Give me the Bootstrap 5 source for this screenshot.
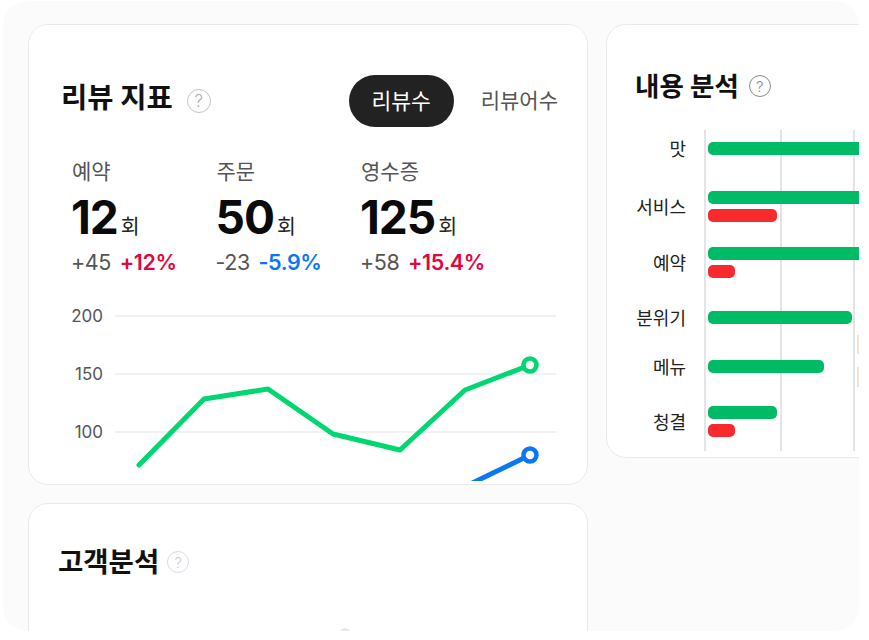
<!DOCTYPE html>
<html lang="ko">
<head>
    <meta charset="UTF-8">
    <meta name="viewport" content="width=device-width, initial-scale=1.0">
    <title>리뷰 지표</title>
    <link href="https://cdn.jsdelivr.net/npm/bootstrap@5.3.0/dist/css/bootstrap.min.css" rel="stylesheet">
    <style>
        body {
            background: #fff;
            font-family: Inter, "Noto Sans CJK KR", sans-serif;
            overflow: hidden;
        }
        /* Panel */
        .panel-wrap {
            width: 856px;
            height: 630px;
            margin: 1px 0 0 3px;
            padding: 23px 0 0 25px;
            background: #fbfbfb;
            border-radius: 24px;
            overflow: hidden;
            gap: 18px;
        }
        .left-col { width: 560px; flex-shrink: 0; gap: 18px; }
        .sheet {
            border: 1.5px solid #e9e9e9;
            border-radius: 20px;
            background: #fff;
            overflow: hidden;
            flex-shrink: 0;
        }
        .sheet-review { height: 461px; padding: 50px 29px 0 32px; }
        .sheet-customer { height: 200px; padding: 39px 0 0 29px; }
        .sheet-content { width: 300px; height: 434px; padding: 42px 0 0 29px; }

        /* Titles */
        .sheet-title { font-size: 28.5px; font-weight: 700; color: #111; line-height: 46px; margin: 0 0 6px; }
        .sheet-title.smaller { font-size: 27.5px; line-height: 38px; margin: 0; }
        .sheet-title.tighter { font-size: 26.5px; line-height: 38px; margin: 0 0 0 -1px; }
        .help-mark {
            width: 24px;
            height: 24px;
            margin-left: 14px;
            border: 1.5px solid #c4c4c4;
            color: #aaa;
            font-size: 17px;
            font-weight: 300;
            line-height: 1;
        }
        .help-mark.dark { width: 22px; height: 22px; margin-left: 10px; border-color: #8a8a8a; color: #8a8a8a; font-size: 15px; }
        .help-mark.pale { width: 22px; height: 22px; margin-left: 8px; border-color: #d8dce2; color: #c8ccd2; font-size: 15px; }

        /* Toggle */
        .pill-on {
            width: 105px;
            height: 52px;
            background: #222;
            color: #fff;
            font-size: 21.5px;
            border-radius: 26px;
            font-weight: 400;
            border: 0;
            padding: 0;
        }
        .pill-off { font-size: 21px; color: #555; margin-left: 27px; background: none; border: 0; padding: 0; }

        /* Stats */
        .stat-row { margin: 30px 0 0 11px; }
        .stat-item { width: 144.5px; }
        .stat-name { font-size: 21px; color: #555; line-height: 30px; margin-bottom: 9px; }
        .stat-num { font-size: 46px; font-weight: 700; color: #0a0a0a; line-height: 42px; letter-spacing: -1px; margin-left: -1px; }
        .stat-unit { font-size: 20.5px; font-weight: 400; color: #222; margin-left: 3px; letter-spacing: 0; }
        .stat-diff { font-size: 21.5px; color: #555; line-height: 28px; white-space: nowrap; letter-spacing: -.4px; margin-left: -1px; }
        .stat-diff b { font-weight: 600; margin-left: 3px; }
        .tone-up { color: #e3053f; }
        .tone-down { color: #0a78f5; }

        /* Line chart */
        .line-plot { display: block; margin: 30px 0 0 -32px; }
        .line-plot text { font-size: 17px; fill: #555; font-family: Inter, sans-serif; }

        /* Bars */
        .bar-plot { margin-top: 24.5px; padding-top: 12px; height: 321px; width: 300px; }
        .grid-v { position: absolute; top: 0; bottom: 0; width: 1.5px; background: #e4e4e4; }
        .tan-edge { position: absolute; left: 221px; width: 2px; background: #f0e2d4; }
        .bar-label { width: 50px; height: 13px; flex-shrink: 0; margin-right: 22px; text-align: right; font-size: 18px; color: #222; line-height: 16px; white-space: nowrap; }
        .bar-stack { gap: 5px; position: relative; }
        .bar-g, .bar-r { height: 13px; border-radius: 5px; }
        .bar-g { background: #00bb66; }
        .bar-r { background: #f92a2d; }
        .bar-row:nth-child(2) { margin-top: 36px; }
        .bar-row:nth-child(3) { margin-top: 25px; }
        .bar-row:nth-child(4) { margin-top: 33px; }
        .bar-row:nth-child(5) { margin-top: 36.5px; }
        .bar-row:nth-child(6) { margin-top: 32.5px; }

        .dot-peek { position: absolute; left: 310px; top: 124px; width: 12px; height: 12px; border-radius: 50%; background: #e4e8f0; }
    </style>
</head>
<body>
    <div class="panel-wrap d-flex">
        <div class="left-col d-flex flex-column">
            <!-- Review metrics -->
            <div class="sheet sheet-review">
                <div class="d-flex align-items-center justify-content-between">
                    <div class="d-flex align-items-center">
                        <h2 class="sheet-title">리뷰 지표</h2>
                        <span class="help-mark rounded-circle d-flex align-items-center justify-content-center">?</span>
                    </div>
                    <div class="d-flex align-items-center">
                        <button class="pill-on">리뷰수</button>
                        <button class="pill-off">리뷰어수</button>
                    </div>
                </div>
                <div class="stat-row d-flex">
                    <div class="stat-item">
                        <div class="stat-name">예약</div>
                        <div class="stat-num">12<span class="stat-unit">회</span></div>
                        <div class="stat-diff">+45 <b class="tone-up">+12%</b></div>
                    </div>
                    <div class="stat-item">
                        <div class="stat-name">주문</div>
                        <div class="stat-num">50<span class="stat-unit">회</span></div>
                        <div class="stat-diff">-23 <b class="tone-down">-5.9%</b></div>
                    </div>
                    <div class="stat-item">
                        <div class="stat-name">영수증</div>
                        <div class="stat-num">125<span class="stat-unit">회</span></div>
                        <div class="stat-diff">+58 <b class="tone-up">+15.4%</b></div>
                    </div>
                </div>
                <svg class="line-plot" width="556" height="175" viewBox="29 306 556 175">
                    <g stroke="#ececec" stroke-width="1.5">
                        <line x1="115" y1="316" x2="556" y2="316"/>
                        <line x1="115" y1="374" x2="556" y2="374"/>
                        <line x1="115" y1="432" x2="556" y2="432"/>
                    </g>
                    <text x="103" y="322" text-anchor="end">200</text>
                    <text x="103" y="380" text-anchor="end">150</text>
                    <text x="103" y="438" text-anchor="end">100</text>
                    <polyline points="139,465 204,399 268,389 333,434 400,450 465,390 530,365" fill="none" stroke="#00d672" stroke-width="5" stroke-linecap="round" stroke-linejoin="round"/>
                    <circle cx="530" cy="365" r="6.5" fill="#fff" stroke="#00d672" stroke-width="4.5"/>
                    <polyline points="460,489 530,455" fill="none" stroke="#0a78f5" stroke-width="5"/>
                    <circle cx="530" cy="455" r="6.5" fill="#fff" stroke="#0a78f5" stroke-width="4.5"/>
                </svg>
            </div>

            <!-- Customer analysis -->
            <div class="sheet sheet-customer position-relative">
                <div class="d-flex align-items-center">
                    <h2 class="sheet-title smaller">고객분석</h2>
                    <span class="help-mark pale rounded-circle d-flex align-items-center justify-content-center">?</span>
                </div>
                <span class="dot-peek"></span>
            </div>
        </div>

        <!-- Content analysis -->
        <div class="sheet sheet-content">
            <div class="d-flex align-items-center">
                <h2 class="sheet-title tighter">내용 분석</h2>
                <span class="help-mark dark rounded-circle d-flex align-items-center justify-content-center">?</span>
            </div>
            <div class="bar-plot position-relative">
                <span class="grid-v" style="left:68px"></span>
                <span class="grid-v" style="left:144px"></span>
                <span class="grid-v" style="left:217px"></span>
                <span class="tan-edge" style="top:205px;height:19px"></span>
                <span class="tan-edge" style="top:237px;height:20px"></span>
                <div class="position-relative" id="barRows"></div>
            </div>
        </div>
    </div>

    <script>
        // bars: label, green px, red px
        const rows = [
            ["맛", 200, 0], ["서비스", 200, 69], ["예약", 200, 27],
            ["분위기", 144, 0], ["메뉴", 116, 0], ["청결", 69, 27]
        ];
        document.getElementById("barRows").innerHTML = rows.map(([name, g, r]) => `
            <div class="bar-row d-flex align-items-center">
                <div class="bar-label">${name}</div>
                <div class="bar-stack d-flex flex-column">
                    <div class="bar-g" style="width:${g}px"></div>
                    ${r ? `<div class="bar-r" style="width:${r}px"></div>` : ""}
                </div>
            </div>`).join("");
    </script>
    <script src="https://cdn.jsdelivr.net/npm/bootstrap@5.3.0/dist/js/bootstrap.bundle.min.js"></script>
</body>
</html>
